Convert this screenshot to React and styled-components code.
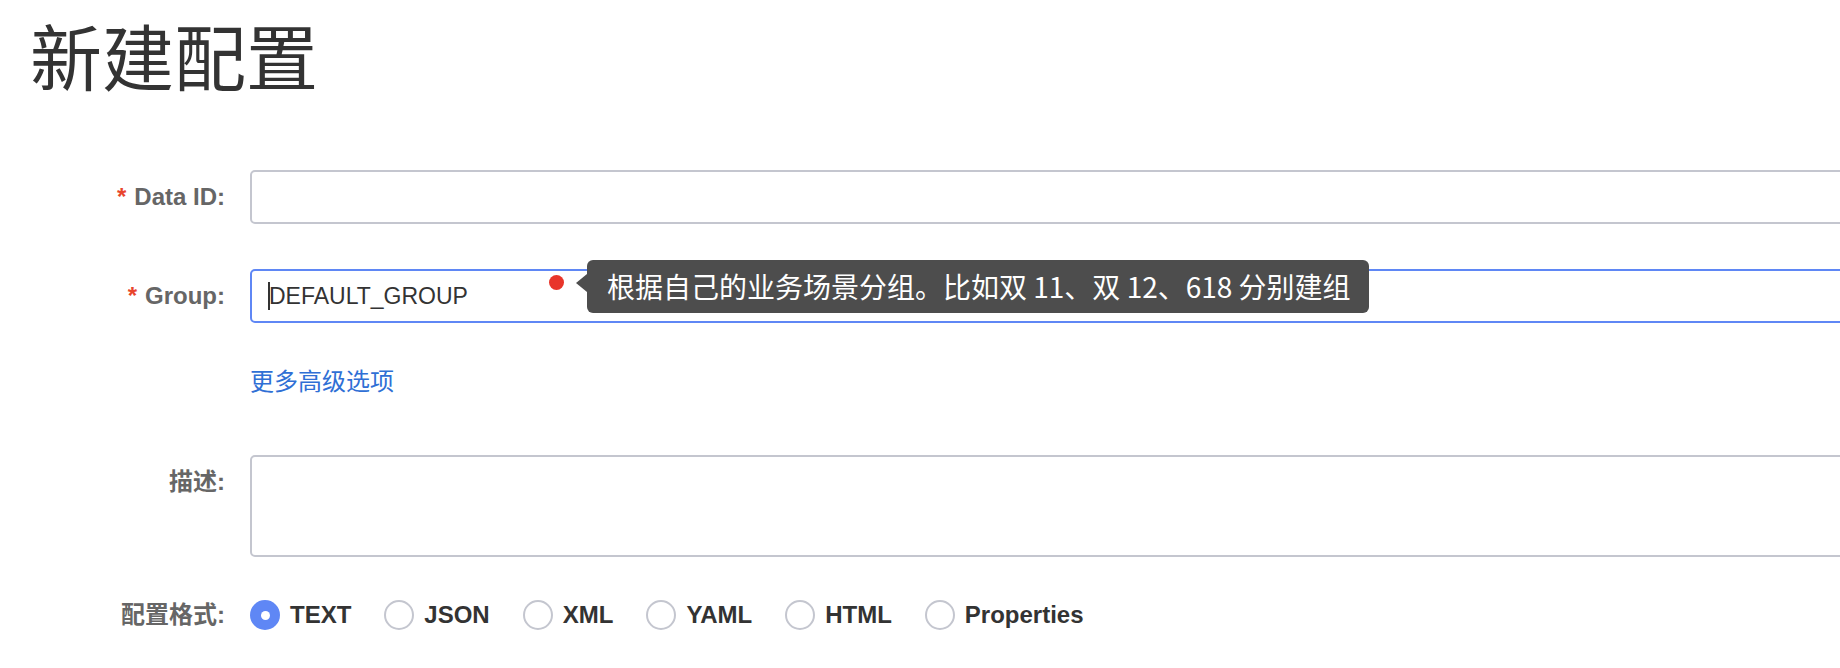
import React from "react";
import styled, { createGlobalStyle } from "styled-components";

const Global = createGlobalStyle`
  html, body { margin: 0; padding: 0; background: #fff; overflow: hidden; }
  body { font-family: "Liberation Sans", "Noto Sans CJK SC", sans-serif; }
  * { box-sizing: border-box; }
`;

const Page = styled.div`
  width: 1900px;
  padding: 0 0 0 30px;
`;

const Title = styled.h1`
  margin: 18px 0 0;
  font-family: "Noto Sans CJK SC", sans-serif;
  font-weight: 400;
  font-size: 72px;
  line-height: 72px;
  color: #333;
`;

const Form = styled.div`
  margin-top: 80px;
  display: flex;
  flex-direction: column;
`;

const Row = styled.div`
  display: grid;
  grid-template-columns: 195px 1fr;
  column-gap: 25px;
  align-items: start;
  margin-bottom: ${(p) => p.$mb || 0}px;
  position: relative;
`;

const Label = styled.div`
  text-align: right;
  font-family: "Liberation Sans", "Noto Sans CJK SC", sans-serif;
  font-weight: 700;
  font-size: 24px;
  line-height: ${(p) => p.$lh || 54}px;
  color: #666;
  white-space: nowrap;
`;

const Star = styled.span`
  color: #e8452c;
  margin-right: 8px;
`;

const Input = styled.div`
  height: 54px;
  border: 2px solid ${(p) => (p.$focus ? "#5f87f5" : "#c4c6cf")};
  border-radius: 5px;
  display: flex;
  align-items: center;
  padding-left: 16px;
  font-family: "Liberation Sans", sans-serif;
  font-size: 23px;
  color: #333;
  position: relative;
`;

const Caret = styled.span`
  display: inline-block;
  width: 2px;
  height: 28px;
  background: #333;
  margin-right: -1px;
`;

const TextArea = styled.div`
  height: 102px;
  border: 2px solid #c4c6cf;
  border-radius: 5px;
`;

const Link = styled.a`
  font-family: "Noto Sans CJK SC", sans-serif;
  font-size: 24px;
  line-height: 24px;
  color: #2f6fd5;
  text-decoration: none;
  grid-column: 2;
`;

const Dot = styled.span`
  position: absolute;
  left: 297px;
  top: 4px;
  width: 15px;
  height: 15px;
  border-radius: 50%;
  background: #e8352a;
`;

const Tip = styled.div`
  position: absolute;
  left: 335px;
  top: -11px;
  height: 53px;
  padding: 0 18px 0 20px;
  background: #4d4d4d;
  border-radius: 6px;
  color: #fff;
  font-family: "Noto Sans CJK SC", sans-serif;
  font-size: 28px;
  line-height: 53px;
  white-space: nowrap;
  &::before {
    content: "";
    position: absolute;
    left: -11px;
    top: 14px;
    border-top: 9px solid transparent;
    border-bottom: 9px solid transparent;
    border-right: 11px solid #4d4d4d;
  }
`;

const Radios = styled.div`
  display: flex;
  align-items: center;
  height: 30px;
`;

const RadioItem = styled.label`
  display: flex;
  align-items: center;
  margin-right: 33px;
  font-family: "Liberation Sans", sans-serif;
  font-weight: 700;
  font-size: 24px;
  color: #333;
`;

const Circle = styled.span`
  width: 30px;
  height: 30px;
  border-radius: 50%;
  margin-right: 10px;
  border: ${(p) => (p.$on ? "none" : "2px solid #c4c6cf")};
  background: ${(p) => (p.$on ? "#5f87f5" : "#fff")};
  display: flex;
  align-items: center;
  justify-content: center;
  &::after {
    content: "";
    display: ${(p) => (p.$on ? "block" : "none")};
    width: 9px;
    height: 9px;
    border-radius: 50%;
    background: #fff;
  }
`;

const formats = ["TEXT", "JSON", "XML", "YAML", "HTML", "Properties"];

export default function App() {
  return (
    <Page>
      <Global />
      <Title>新建配置</Title>
      <Form>
        <Row $mb={45}>
          <Label>
            <Star>*</Star>Data ID:
          </Label>
          <Input />
        </Row>
        <Row $mb={45}>
          <Label>
            <Star>*</Star>Group:
          </Label>
          <Input $focus>
            <Caret />
            DEFAULT_GROUP
            <Dot />
            <Tip>根据自己的业务场景分组。比如双 11、双 12、618 分别建组</Tip>
          </Input>
        </Row>
        <Row $mb={63}>
          <Link href="#">更多高级选项</Link>
        </Row>
        <Row $mb={43}>
          <Label>描述:</Label>
          <TextArea />
        </Row>
        <Row>
          <Label $lh={30}>配置格式:</Label>
          <Radios>
            {formats.map((f, i) => (
              <RadioItem key={f}>
                <Circle $on={i === 0} />
                {f}
              </RadioItem>
            ))}
          </Radios>
        </Row>
      </Form>
    </Page>
  );
}
